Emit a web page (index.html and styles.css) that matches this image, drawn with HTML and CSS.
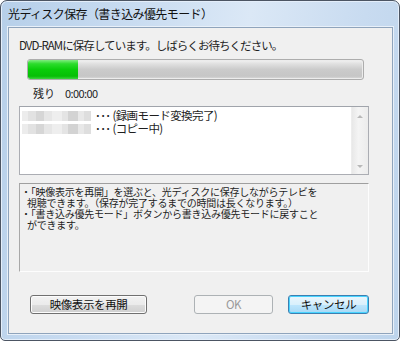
FILE: index.html
```html
<!DOCTYPE html>
<html lang="ja">
<head>
    <meta charset="UTF-8">
    <title>光ディスク保存（書き込み優先モード）</title>
    <link rel="stylesheet" href="styles.css">
</head>
<body>
    <div class="window">
        <div class="titlebar">光ディスク保存（書き込み優先モード）</div>

        <div class="client">
            <p class="message">DVD-RAMに保存しています。しばらくお待ちください。</p>

            <div class="progress">
                <div class="progress-fill" style="width: 15%"></div>
            </div>

            <div class="remain">
                <span class="remain-label">残り</span>
                <span class="remain-time">0:00:00</span>
            </div>

            <div class="listbox">
                <ul class="list-items">
                    <li><span class="blurred"></span>･･･ (録画モード変換完了)</li>
                    <li><span class="blurred"></span>･･･ (コピー中)</li>
                </ul>
                <div class="scrollbar">
                    <span class="arrow up"></span>
                    <span class="arrow down"></span>
                </div>
            </div>

            <div class="info">
                <p>・「映像表示を再開」を選ぶと、光ディスクに保存しながらテレビを</p>
                <p class="indent">視聴できます。（保存が完了するまでの時間は長くなります。）</p>
                <p>・「書き込み優先モード」ボタンから書き込み優先モードに戻すこと</p>
                <p class="indent">ができます。</p>
            </div>

            <div class="buttons">
                <button class="btn btn-resume">映像表示を再開</button>
                <div class="btn-group">
                    <button class="btn btn-ok" disabled>OK</button>
                    <button class="btn btn-default">キャンセル</button>
                </div>
            </div>
        </div>
    </div>
</body>
</html>
```

FILE: styles.css
```css
* {
    margin: 0;
    padding: 0;
    box-sizing: border-box;
}

body {
    width: 400px;
    height: 341px;
    overflow: hidden;
    background: #ffffff;
    font-family: "Noto Sans CJK JP", "Noto Sans", sans-serif;
    font-size: 11px;
    color: #1e1e1e;
}

.window {
    width: 400px;
    height: 341px;
    display: flex;
    flex-direction: column;
    padding: 0 6px 6px 7px;
    border: 1px solid #4c5563;
    border-radius: 7px 7px 5px 5px;
    background: linear-gradient(100deg, #b6cfe9 0%, #c9dcf1 30%, #dbe8f6 55%, #c8dbf0 80%, #bdd4ec 100%);
    box-shadow: inset 0 0 0 1px #e4eefa;
}

.titlebar {
    height: 26px;
    display: flex;
    align-items: center;
    font-size: 12px;
    letter-spacing: -0.6px;
    color: #111;
    padding-bottom: 1px;
}

.client {
    flex: 1;
    display: flex;
    flex-direction: column;
    background: #f0f0f0;
    border: 1px solid #8fa4bc;
    box-shadow: 0 0 0 1px #e8f0f9;
    padding: 9px 23px 0 10px;
}

.message {
    font-size: 11.5px;
    letter-spacing: -0.95px;
    line-height: 16px;
}

.progress {
    margin: 6px 5px 0 8px;
    height: 21px;
    border: 1px solid #adadad;
    border-radius: 3px;
    background: linear-gradient(#f3f3f3 0%, #e0e0e0 20%, #cbcbcb 50%, #c6c6c6 85%, #dcdcdc 100%);
    box-shadow: inset 0 0 0 1px #ececec;
    overflow: hidden;
}

.progress-fill {
    height: 100%;
    border-radius: 2px 0 0 2px;
    background: linear-gradient(#80ec80 0%, #2cdc2c 20%, #0acd0a 50%, #07bf07 85%, #3fd43f 100%);
}

.remain {
    display: flex;
    gap: 10px;
    margin: 5px 0 0 14px;
    line-height: 16px;
    font-size: 11px;
}

.remain-time {
    letter-spacing: -0.6px;
}

.listbox {
    margin-top: 5px;
    height: 69px;
    display: flex;
    background: #ffffff;
    border: 1px solid #abadb3;
    border-top-color: #a0a4ab;
}

.list-items {
    flex: 1;
    list-style: none;
    padding: 2px 0 0 2px;
    line-height: 13px;
    font-size: 11.5px;
    letter-spacing: -0.6px;
}

.list-items li {
    display: flex;
    align-items: center;
    white-space: nowrap;
}

.blurred {
    width: 69px;
    height: 10px;
    margin-right: 4px;
    background: linear-gradient(90deg, #ececec 0 6px, #e2e2e2 6px 14px, #d6d6d6 14px 22px, #e6e6e6 22px 30px, #eeeeee 30px 40px, #e4e4e4 40px 46px, #d3d3d3 46px 56px, #e8e8e8 56px 62px, #dedede 62px 69px);
}

.scrollbar {
    width: 17px;
    display: flex;
    flex-direction: column;
    justify-content: space-between;
    align-items: center;
    padding: 8px 0 6px;
    background: linear-gradient(90deg, #e8e8e8, #f4f4f4 40%, #ececec);
    border-left: 1px solid #ededed;
}

.arrow {
    width: 0;
    height: 0;
    border-left: 3px solid transparent;
    border-right: 3px solid transparent;
}

.arrow.up {
    border-bottom: 3px solid #b8b8b8;
}

.arrow.down {
    border-top: 3px solid #b8b8b8;
}

.info {
    margin-top: 8px;
    height: 89px;
    padding: 2px 0 0 1px;
    border-top: 1px solid #9f9f9f;
    border-left: 1px solid #a8a8a8;
    border-right: 1px solid #fdfdfd;
    border-bottom: 1px solid #fdfdfd;
    font-size: 10px;
    line-height: 11px;
    letter-spacing: -0.25px;
    white-space: nowrap;
}

.info .indent {
    padding-left: 6px;
}

.buttons {
    display: flex;
    justify-content: space-between;
    margin: 23px 0 0 11px;
}

.btn-group {
    display: flex;
    gap: 15px;
}

.btn {
    height: 19px;
    font-family: "Noto Sans CJK JP", "Noto Sans", sans-serif;
    font-size: 11.5px;
    letter-spacing: -0.4px;
    color: #111;
    border: 1px solid #707070;
    border-radius: 3px;
    background: linear-gradient(#f2f2f2 0%, #ebebeb 50%, #dddddd 51%, #cfcfcf 100%);
    box-shadow: inset 0 0 0 1px #fcfcfc;
    line-height: 15px;
}

.btn-resume {
    width: 117px;
}

.btn-ok {
    width: 79px;
    color: #9a9a9a;
    border-color: #adb2b5;
    background: #f4f4f4;
    box-shadow: none;
}

.btn-default {
    width: 81px;
    border-color: #3c7fb1;
    background: linear-gradient(#eaf6fd 0%, #d9f0fc 50%, #bee6fd 51%, #a7d9f5 100%);
    box-shadow: inset 0 0 0 1px #48d4ff;
}
```
